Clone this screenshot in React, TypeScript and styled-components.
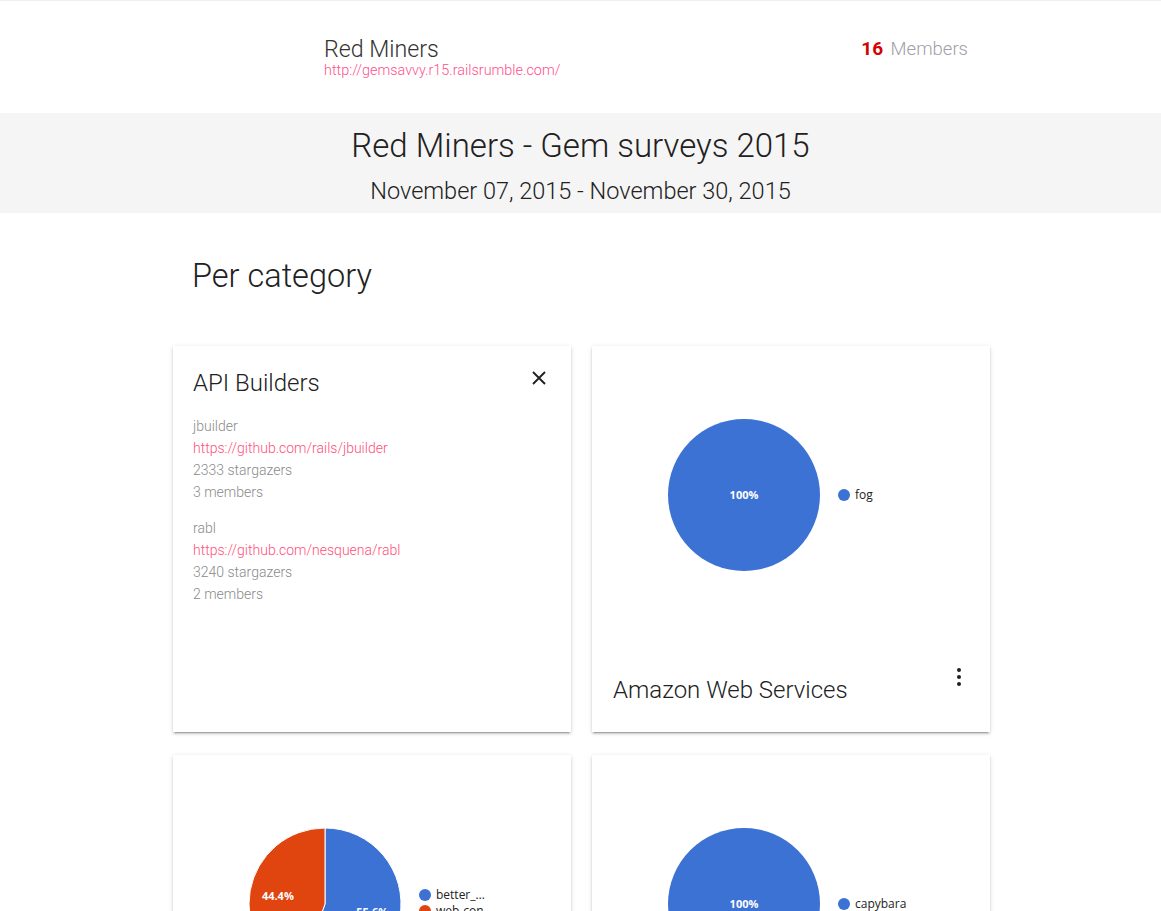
import {FC} from 'react';
import {createGlobalStyle, styled} from 'styled-components';

const GlobalStyle = createGlobalStyle`
  html, body {
    margin: 0;
    padding: 0;
    background: #ffffff;
  }
  body {
    font-family: Roboto, "Noto Sans", sans-serif;
    font-weight: 300;
    color: #212121;
  }
`;

interface Slice {
  label: string;
  value: number;
  color: string;
}

interface Category {
  title: string;
  slices: Slice[];
}

const BLUE = '#3b72d4';
const ORANGE = '#e0440f';

const categories: Category[] = [
  {title: 'Amazon Web Services', slices: [{label: 'fog', value: 1, color: BLUE}]},
  {
    title: 'Debugging',
    slices: [
      {label: 'better_…', value: 5, color: BLUE},
      {label: 'web-con…', value: 4, color: ORANGE},
    ],
  },
  {title: 'Acceptance Testing', slices: [{label: 'capybara', value: 1, color: BLUE}]},
];

const gems = [
  {name: 'jbuilder', url: 'https://github.com/rails/jbuilder', stars: 2333, members: 3},
  {name: 'rabl', url: 'https://github.com/nesquena/rabl', stars: 3240, members: 2},
];

const CX = 152;
const CY = 149;
const R = 76;

const point = (angle: number): [number, number] => {
  const rad = (angle * Math.PI) / 180;
  return [CX + R * Math.sin(rad), CY - R * Math.cos(rad)];
};

const PieChart: FC<{slices: Slice[]}> = ({slices}) => {
  const total = slices.reduce((s, x) => s + x.value, 0);
  let start = 0;
  const legendTop = CY - ((slices.length - 1) * 16) / 2 - (slices.length > 1 ? 1 : 0);
  return (
    <ChartSvg width={398} height={300} viewBox="0 0 398 300">
      {slices.map(slice => {
        const sweep = (slice.value / total) * 360;
        const from = start;
        const to = start + sweep;
        start = to;
        const mid = (((from + to) / 2) * Math.PI) / 180;
        const lx = CX + R * 0.63 * Math.sin(mid);
        const ly = CY - R * 0.63 * Math.cos(mid);
        const pct = `${Math.round((slice.value / total) * 1000) / 10}%`;
        if (sweep >= 360) {
          return (
            <g key={slice.label}>
              <circle cx={CX} cy={CY} r={R} fill={slice.color} />
              <PieLabel x={CX} y={CY + 4} textAnchor="middle">
                {pct}
              </PieLabel>
            </g>
          );
        }
        const [x1, y1] = point(from);
        const [x2, y2] = point(to);
        const large = sweep > 180 ? 1 : 0;
        return (
          <g key={slice.label}>
            <path
              d={`M ${CX} ${CY} L ${x1} ${y1} A ${R} ${R} 0 ${large} 1 ${x2} ${y2} Z`}
              fill={slice.color}
              stroke="#ffffff"
              strokeWidth={1}
            />
            <PieLabel x={lx} y={ly + 4} textAnchor="middle">
              {pct}
            </PieLabel>
          </g>
        );
      })}
      {slices.map((slice, i) => (
        <g key={`legend-${slice.label}`}>
          <circle cx={252} cy={legendTop + i * 16} r={6} fill={slice.color} />
          <LegendText x={263} y={legendTop + i * 16 + 4}>
            {slice.label}
          </LegendText>
        </g>
      ))}
    </ChartSvg>
  );
};

const CloseIcon: FC = () => (
  <svg width={14} height={14} viewBox="0 0 14 14">
    <path d="M1 1 L13 13 M13 1 L1 13" stroke="#212121" strokeWidth={1.9} fill="none" />
  </svg>
);

const MoreIcon: FC = () => (
  <svg width={4} height={18} viewBox="0 0 4 18">
    <circle cx={2} cy={2} r={2} fill="#212121" />
    <circle cx={2} cy={9} r={2} fill="#212121" />
    <circle cx={2} cy={16} r={2} fill="#212121" />
  </svg>
);

const App: FC = () => (
  <>
    <GlobalStyle />
    <TopBar>
      <Team>
        <TeamName>Red Miners</TeamName>
        <TeamUrl href="#">http://gemsavvy.r15.railsrumble.com/</TeamUrl>
      </Team>
      <MemberCount>
        <Count>16</Count> Members
      </MemberCount>
    </TopBar>
    <Band>
      <SurveyTitle>Red Miners - Gem surveys 2015</SurveyTitle>
      <SurveyDates>November 07, 2015 - November 30, 2015</SurveyDates>
    </Band>
    <Main>
      <SectionTitle>Per category</SectionTitle>
      <Grid>
        <Card>
          <CardHead>
            <CardTitle>API Builders</CardTitle>
            <IconButton aria-label="close">
              <CloseIcon />
            </IconButton>
          </CardHead>
          {gems.map(gem => (
            <Gem key={gem.name}>
              <GemLine>{gem.name}</GemLine>
              <GemLink href="#">{gem.url}</GemLink>
              <GemLine>{gem.stars} stargazers</GemLine>
              <GemLine>{gem.members} members</GemLine>
            </Gem>
          ))}
        </Card>
        {categories.map(cat => (
          <Card key={cat.title}>
            <PieChart slices={cat.slices} />
            <CardFoot>
              <CardTitle>{cat.title}</CardTitle>
              <MenuButton aria-label="more">
                <MoreIcon />
              </MenuButton>
            </CardFoot>
          </Card>
        ))}
      </Grid>
    </Main>
  </>
);

export default App;

const TopBar = styled.header`
  display: flex;
  justify-content: space-between;
  align-items: flex-start;
  height: 113px;
  box-sizing: border-box;
  border-top: 1px solid #f0f0f0;
  padding: 35px 193px 0 324px;
`;

const Team = styled.div`
  display: flex;
  flex-direction: column;
`;

const TeamName = styled.div`
  font-size: 23.2px;
  line-height: 26px;
  color: #333333;
`;

const TeamUrl = styled.a`
  font-size: 14.4px;
  line-height: 18px;
  color: #ff4f8b;
  text-decoration: none;
`;

const MemberCount = styled.div`
  margin-top: 1px;
  font-size: 18.5px;
  line-height: 24px;
  color: #a0a0a8;
`;

const Count = styled.span`
  margin-right: 3px;
  font-weight: 700;
  font-size: 19px;
  color: #d50000;
`;

const Band = styled.section`
  height: 100px;
  box-sizing: border-box;
  padding-top: 13px;
  background: #f5f5f5;
  text-align: center;
`;

const SurveyTitle = styled.h1`
  margin: 0;
  font-size: 33px;
  line-height: 40px;
  font-weight: 300;
  color: #212121;
`;

const SurveyDates = styled.h2`
  margin: 10px 0 0;
  font-size: 23.5px;
  line-height: 30px;
  font-weight: 300;
  color: #212121;
`;

const Main = styled.main`
  width: 817px;
  margin: 0 0 0 173px;
  padding-bottom: 40px;
`;

const SectionTitle = styled.h3`
  margin: 43px 0 50px 19px;
  font-size: 32.5px;
  line-height: 40px;
  font-weight: 300;
  color: #212121;
`;

const Grid = styled.div`
  display: grid;
  grid-template-columns: 398px 398px;
  grid-auto-rows: 386px;
  column-gap: 21px;
  row-gap: 23px;
`;

const Card = styled.div`
  display: flex;
  flex-direction: column;
  background: #ffffff;
  box-shadow:
    0 2px 2px 0 rgba(0, 0, 0, 0.14),
    0 3px 1px -2px rgba(0, 0, 0, 0.2),
    0 1px 5px 0 rgba(0, 0, 0, 0.12);
  overflow: hidden;
`;

const CardHead = styled.div`
  display: flex;
  justify-content: space-between;
  align-items: flex-start;
  padding: 23px 25px 18px 20px;
`;

const CardTitle = styled.h4`
  margin: 0;
  font-size: 24px;
  line-height: 28px;
  font-weight: 300;
  color: #212121;
`;

const IconButton = styled.button`
  display: flex;
  padding: 0;
  margin-top: 2px;
  border: none;
  background: none;
  cursor: pointer;
`;

const MenuButton = styled(IconButton)`
  margin: -8px 8px 0 0;
`;

const Gem = styled.div`
  display: flex;
  flex-direction: column;
  padding: 0 20px;
  margin-bottom: 14px;
`;

const GemLine = styled.span`
  font-size: 14px;
  line-height: 22px;
  color: #8a8a8a;
`;

const GemLink = styled.a`
  font-size: 14px;
  line-height: 22px;
  color: #ff4f7b;
  text-decoration: none;
`;

const ChartSvg = styled.svg`
  display: block;
  flex-shrink: 0;
`;

const PieLabel = styled.text`
  font-family: "Open Sans", "Liberation Sans", sans-serif;
  font-size: 11px;
  font-weight: 700;
  fill: #ffffff;
`;

const LegendText = styled.text`
  font-family: "Open Sans", "Liberation Sans", sans-serif;
  font-size: 12px;
  font-weight: 400;
  fill: #222222;
`;

const CardFoot = styled.div`
  display: flex;
  justify-content: space-between;
  align-items: flex-start;
  padding: 30px 21px 0 21px;
`;
